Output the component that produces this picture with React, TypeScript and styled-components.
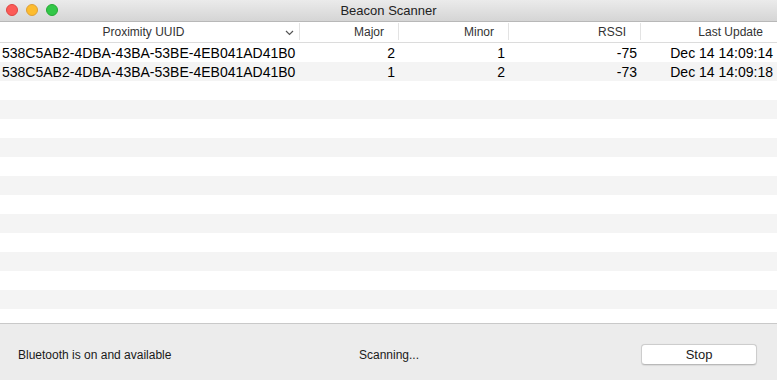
import React from 'react';
import styled, { createGlobalStyle } from 'styled-components';

const beacons = [
  { uuid: '538C5AB2-4DBA-43BA-53BE-4EB041AD41B0', major: 2, minor: 1, rssi: -75, updated: 'Dec 14 14:09:14' },
  { uuid: '538C5AB2-4DBA-43BA-53BE-4EB041AD41B0', major: 1, minor: 2, rssi: -73, updated: 'Dec 14 14:09:18' },
];

const columns = [
  { title: 'Proximity UUID', width: 300 },
  { title: 'Major', width: 99 },
  { title: 'Minor', width: 110 },
  { title: 'RSSI', width: 132 },
  { title: 'Last Update', width: 136 },
];

const GRID = columns.map((c) => `${c.width}px`).join(' ');

const App = () => {
  return (
    <Window>
      <GlobalStyle />
      <TitleBar>
        <Lights>
          <Light $color="#fc5b57" $border="#de4643" />
          <Light $color="#fdbc2e" $border="#dea036" />
          <Light $color="#33c748" $border="#27aa35" />
        </Lights>
        <Title>Beacon Scanner</Title>
      </TitleBar>
      <Table>
        <HeaderRow>
          <HeaderCell $align="center">
            {columns[0].title}
            <Chevron width="9" height="6" viewBox="0 0 9 6">
              <path d="M1 1 L4.5 4.5 L8 1" fill="none" stroke="#555" strokeWidth="1.2" />
            </Chevron>
          </HeaderCell>
          {columns.slice(1).map((c, i) => (
            <HeaderCell key={c.title} $align="right" $last={i === columns.length - 2}>
              {c.title}
            </HeaderCell>
          ))}
        </HeaderRow>
        <Body>
          {beacons.map((b, i) => (
            <Row key={i}>
              <Cell $align="left">{b.uuid}</Cell>
              <Cell $align="right">{b.major}</Cell>
              <Cell $align="right">{b.minor}</Cell>
              <Cell $align="right">{b.rssi}</Cell>
              <Cell $align="right">{b.updated}</Cell>
            </Row>
          ))}
        </Body>
      </Table>
      <Footer>
        <Status>Bluetooth is on and available</Status>
        <Status>Scanning...</Status>
        <Button>Stop</Button>
      </Footer>
    </Window>
  );
};

const GlobalStyle = createGlobalStyle`
  html, body {
    margin: 0;
    padding: 0;
    background: #ececec;
  }
  body {
    font-family: "Liberation Sans", Arial, sans-serif;
  }
`;

const Window = styled.div`
  width: 777px;
  height: 380px;
  display: flex;
  flex-direction: column;
  overflow: hidden;
  background: #ececec;
`;

const TitleBar = styled.div`
  position: relative;
  height: 21px;
  flex: none;
  display: flex;
  align-items: center;
  justify-content: center;
  background: linear-gradient(to bottom, #ebebeb, #d5d5d5);
  border-bottom: 1px solid #b8b8b8;
`;

const Lights = styled.div`
  position: absolute;
  left: 6px;
  top: 4px;
  display: flex;
  gap: 8px;
`;

const Light = styled.span<{ $color: string; $border: string }>`
  width: 12px;
  height: 12px;
  border-radius: 50%;
  box-sizing: border-box;
  background: ${(p) => p.$color};
  border: 0.5px solid ${(p) => p.$border};
`;

const Title = styled.div`
  font-size: 13px;
  color: #222;
`;

const Table = styled.div`
  flex: 1;
  display: flex;
  flex-direction: column;
  background: #fff;
  border-bottom: 1px solid #c9c9c9;
  min-height: 0;
`;

const HeaderRow = styled.div`
  display: grid;
  grid-template-columns: ${GRID};
  height: 20px;
  background: #fff;
  border-bottom: 1px solid #dcdcdc;
`;

const HeaderCell = styled.div<{ $align: 'center' | 'right'; $last?: boolean }>`
  position: relative;
  display: flex;
  align-items: center;
  justify-content: ${(p) => (p.$align === 'center' ? 'center' : 'flex-end')};
  padding: 0 ${(p) => (p.$align === 'center' ? '12px' : '14px')} 0 0;
  font-size: 12px;
  color: #333;
  border-right: ${(p) => (p.$last ? 'none' : '1px solid #e3e3e3')};
  margin: 1px 0 2px;
  box-sizing: border-box;
`;

const Chevron = styled.svg`
  position: absolute;
  right: 5px;
  top: 7px;
`;

const Body = styled.div`
  flex: 1;
  background: repeating-linear-gradient(to bottom, #fff 0 19px, #f4f4f4 19px 38px);
`;

const Row = styled.div`
  display: grid;
  grid-template-columns: ${GRID};
  height: 19px;
`;

const Cell = styled.div<{ $align: 'left' | 'right' }>`
  display: flex;
  align-items: center;
  justify-content: ${(p) => (p.$align === 'left' ? 'flex-start' : 'flex-end')};
  padding: 0 4px 0 2px;
  font-size: 14px;
  color: #000;
  white-space: nowrap;
  overflow: hidden;
`;

const Footer = styled.div`
  height: 56px;
  flex: none;
  display: grid;
  grid-template-columns: 341px 1fr 116px;
  align-items: center;
  padding: 5px 20px 0 18px;
  box-sizing: border-box;
`;

const Status = styled.div`
  font-size: 12px;
  color: #1a1a1a;
`;

const Button = styled.button`
  height: 21px;
  background: #fff;
  border: 1px solid #cdcdcd;
  border-bottom-color: #b9b9b9;
  border-radius: 4px;
  font-family: "Liberation Sans", Arial, sans-serif;
  font-size: 13px;
  color: #1a1a1a;
  padding: 0;
  box-shadow: 0 0.5px 1px rgba(0, 0, 0, 0.08);
`;

export default App;
